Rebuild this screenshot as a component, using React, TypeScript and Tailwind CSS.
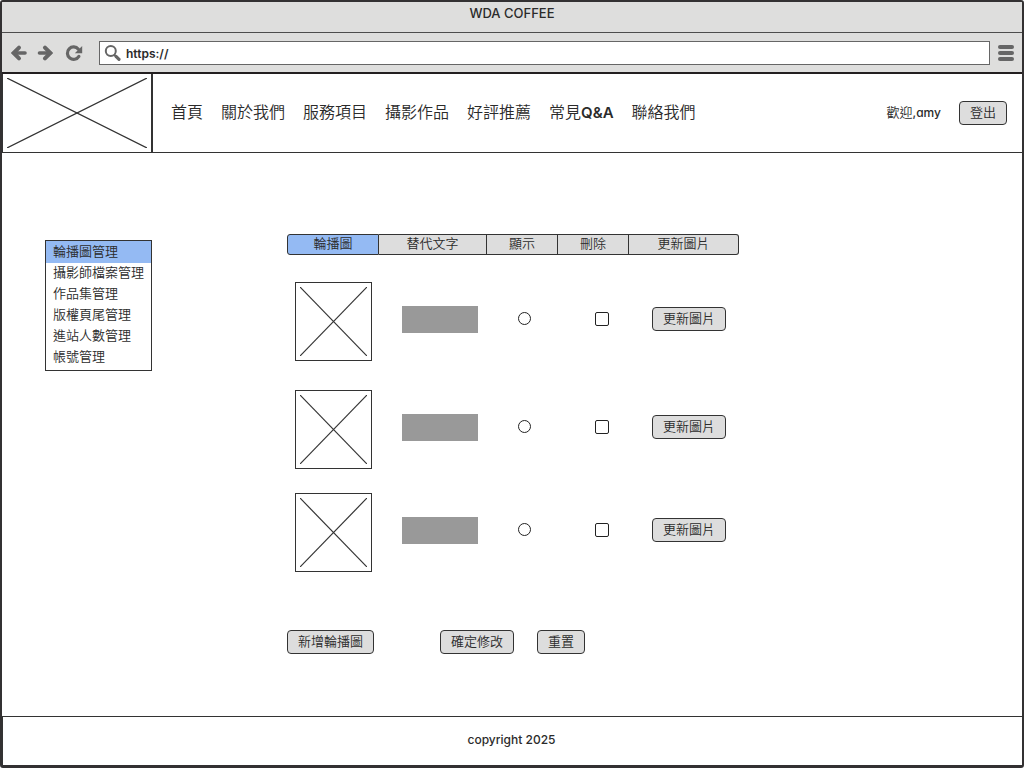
const navItems = [
  { text: "首頁" },
  { text: "關於我們" },
  { text: "服務項目" },
  { text: "攝影作品" },
  { text: "好評推薦" },
  { text: "常見", latin: "Q&A" },
  { text: "聯絡我們" },
];

const menuItems = [
  "輪播圖管理",
  "攝影師檔案管理",
  "作品集管理",
  "版權頁尾管理",
  "進站人數管理",
  "帳號管理",
];

const columns = [
  { label: "輪播圖", width: "w-[92px]" },
  { label: "替代文字", width: "w-[108px]" },
  { label: "顯示", width: "w-[71px]" },
  { label: "刪除", width: "w-[71px]" },
  { label: "更新圖片", width: "w-[110px]" },
];

const rows = [
  { id: 1, height: "h-[108px]" },
  { id: 2, height: "h-[103px]" },
  { id: 3, height: "h-[79px]" },
];

function Button({ children }: { children: string }) {
  return (
    <button
      type="button"
      className="h-6 rounded-[4px] border border-[#333] bg-[#ddd] px-2.5 pb-0.5 text-[13px] leading-5 whitespace-nowrap"
    >
      {children}
    </button>
  );
}

function Cross({ label }: { label: string }) {
  return (
    <svg className="block h-full w-full" role="img" aria-label={label} stroke="#333" strokeWidth="1.2">
      <line x1="0" y1="0" x2="100%" y2="100%" />
      <line x1="0" y1="100%" x2="100%" y2="0" />
    </svg>
  );
}

function BrowserBar() {
  return (
    <>
      <div className="flex h-[31px] justify-center border-b border-[#4d4d4d] bg-[#dededd] pt-px text-[13px] leading-5 font-medium">
        WDA COFFEE
      </div>
      <div className="flex h-[41px] items-center border-b-2 border-[#231f20] bg-[#dededd] pr-2 pl-[7px]">
        <div className="flex items-center text-[#666]">
          <button type="button" aria-label="上一頁">
            <svg className="block size-[18px]" viewBox="0 0 18 18" fill="none" stroke="currentColor" strokeLinecap="round">
              <path d="M10 3.6 4.6 9 10 14.4" strokeWidth="4" />
              <path d="M5 9h11" strokeWidth="3.6" />
            </svg>
          </button>
          <button type="button" aria-label="下一頁" className="ml-2">
            <svg className="block size-[18px]" viewBox="0 0 18 18" fill="none" stroke="currentColor" strokeLinecap="round">
              <path d="M10 3.6 15.4 9 10 14.4" strokeWidth="4" />
              <path d="M15 9H4.5" strokeWidth="3.6" />
            </svg>
          </button>
          <button type="button" aria-label="重新整理" className="ml-3">
            <svg className="block size-[18px]" viewBox="0 0 18 18" fill="none" stroke="currentColor" strokeWidth="3.2">
              <path d="M13.4 5.2A6.2 6.2 0 1 0 13.9 12.4" strokeLinecap="round" />
              <path d="M17.2 2V9.2H9.8Z" fill="currentColor" stroke="none" />
            </svg>
          </button>
        </div>
        <label className="ml-4 flex h-6 flex-1 items-center border border-[#666] bg-white pl-1">
          <svg className="block size-[18px] shrink-0" viewBox="0 0 18 18" fill="none" stroke="#666" strokeLinecap="round">
            <circle cx="6.8" cy="7" r="5" strokeWidth="2" />
            <path d="m10.8 11.2 1 1" strokeWidth="2" />
            <path d="m12 12.4 3 3" strokeWidth="3.2" />
          </svg>
          <input
            type="text"
            aria-label="網址"
            defaultValue="https://"
            className="ml-1 min-w-0 flex-1 bg-transparent pt-0.5 text-xs font-semibold outline-none"
          />
        </label>
        <button type="button" aria-label="選單" className="ml-2 flex w-4 flex-col gap-0.5">
          <span className="h-1 rounded-full bg-[#666]" />
          <span className="h-1 rounded-full bg-[#666]" />
          <span className="h-1 rounded-full bg-[#666]" />
        </button>
      </div>
    </>
  );
}

export default function App() {
  return (
    <div className="flex min-h-screen flex-col overflow-hidden rounded-[3px] border-2 border-b-[3px] border-[#333132] bg-white font-['Inter','Noto_Sans_CJK_TC',sans-serif] font-[350] text-[#2b2b2b] [font-feature-settings:'cv11']">
      <BrowserBar />

      <header className="flex h-[79px] items-stretch border-b border-l border-[#333]">
        <div className="w-[150px] border-r-2 border-[#333] p-1">
          <Cross label="標誌" />
        </div>
        <nav className="flex flex-1 items-center gap-[18px] pb-0.5 pl-[18px] text-base">
          {navItems.map((item) => (
            <a key={item.text} href="#" className="whitespace-nowrap">
              {item.text}
              {item.latin && <span className="text-[15px] font-semibold">{item.latin}</span>}
            </a>
          ))}
        </nav>
        <div className="flex items-center gap-[18px] pr-[15px] text-[13px]">
          <span>
            歡迎<span className="text-xs font-medium">,amy</span>
          </span>
          <Button>登出</Button>
        </div>
      </header>

      <main className="flex flex-1 items-start pb-[62px] pl-[43px] text-[13px]">
        <ul className="mt-[87px] w-[107px] border border-[#333] pb-0.5">
          {menuItems.map((item, index) => (
            <li key={item}>
              <a
                href="#"
                className={
                  index === 0
                    ? "block h-[22px] bg-[#94baf3] px-[7px] leading-5 whitespace-nowrap"
                    : "block h-[21px] px-[7px] leading-[18px] whitespace-nowrap"
                }
              >
                {item}
              </a>
            </li>
          ))}
        </ul>

        <form className="mt-[81px] ml-[135px]">
          <table className="w-[452px] table-fixed border-separate border-spacing-0">
            <thead>
              <tr>
                {columns.map((column) => (
                  <th
                    key={column.label}
                    scope="col"
                    className={`${column.width} h-[21px] border-y border-r border-[#333] bg-[#ddd] p-0 pb-0.5 leading-[17px] font-[350] first:rounded-l-[3px] first:border-l first:bg-[#94baf3] last:rounded-r-[3px]`}
                  >
                    {column.label}
                  </th>
                ))}
              </tr>
            </thead>
            <tbody>
              <tr aria-hidden="true">
                <td colSpan={5} className="h-[27px] p-0" />
              </tr>
              {rows.map((row) => (
                <tr key={row.id} className={`${row.height} align-top`}>
                  <td className="p-0 pl-2">
                    <div className="h-[79px] w-[77px] border border-[#333] p-1">
                      <Cross label={`輪播圖 ${row.id}`} />
                    </div>
                  </td>
                  <td className="p-0 pt-6 pl-[23px]">
                    <input
                      type="text"
                      aria-label={`替代文字 ${row.id}`}
                      className="block h-[27px] w-[76px] bg-[#999] px-1 outline-none"
                    />
                  </td>
                  <td className="p-0 pt-[30px] pl-[31px]">
                    <input
                      type="radio"
                      name="visible"
                      aria-label={`顯示 ${row.id}`}
                      className="block size-[13px] appearance-none rounded-full border border-[#222] bg-white checked:bg-[#333]"
                    />
                  </td>
                  <td className="p-0 pt-[30px] pl-[37px]">
                    <input
                      type="checkbox"
                      aria-label={`刪除 ${row.id}`}
                      className="block size-3.5 appearance-none rounded-[2px] border border-[#222] bg-white checked:bg-[#333]"
                    />
                  </td>
                  <td className="p-0 pt-[25px] pl-[23px]">
                    <Button>更新圖片</Button>
                  </td>
                </tr>
              ))}
            </tbody>
          </table>

          <div className="mt-[58px] flex">
            <Button>新增輪播圖</Button>
            <div className="ml-[66px] flex gap-[23px]">
              <Button>確定修改</Button>
              <Button>重置</Button>
            </div>
          </div>
        </form>
      </main>

      <footer className="flex h-[49px] items-center justify-center border-t border-l border-[#333] pr-0.5 pb-0.5 text-xs font-medium">
        copyright 2025
      </footer>
    </div>
  );
}
